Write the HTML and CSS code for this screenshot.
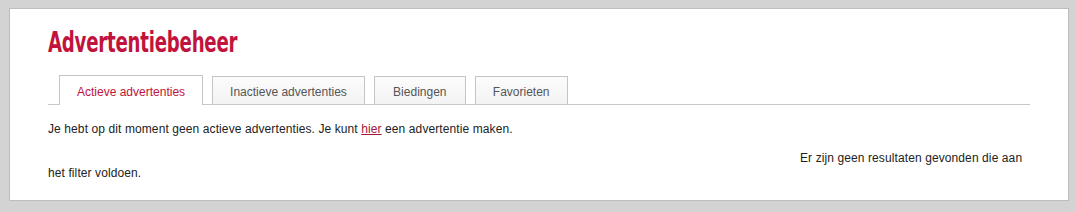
FILE: index.html
```html
<!DOCTYPE html>
<html lang="nl">
<head>
<meta charset="utf-8">
<title>Advertentiebeheer</title>
<link rel="stylesheet" href="styles.css">
</head>
<body>
<div class="panel">
  <h1 class="title"><span class="title-text">Advertentiebeheer</span></h1>
  <ul class="tabs">
    <li class="tab active">Actieve advertenties</li>
    <li class="tab">Inactieve advertenties</li>
    <li class="tab">Biedingen</li>
    <li class="tab">Favorieten</li>
  </ul>
  <p class="intro">Je hebt op dit moment geen actieve advertenties. Je kunt <a href="#" class="link">hier</a> een advertentie maken.</p>
  <p class="empty">Er zijn geen resultaten gevonden die aan het filter voldoen.</p>
</div>
</body>
</html>
```
FILE: styles.css
```css
html, body {
  margin: 0;
  padding: 0;
  background: #d3d3d3;
}
body {
  padding: 8px 0 0 9px;
  font-family: "Liberation Sans", Arial, sans-serif;
  font-size: 12px;
  letter-spacing: 0.1px;
  color: #222;
}
.panel {
  box-sizing: border-box;
  width: 1060px;
  height: 193px;
  background: #fff;
  border: 1px solid #bdbdbd;
  padding: 0 38px;
}
.title {
  margin: 0;
  padding-top: 14px;
  font-family: "DejaVu Sans Condensed", "Liberation Sans Narrow", sans-serif;
  font-weight: bold;
  font-size: 28px;
  line-height: 40px;
  letter-spacing: -0.3px;
  color: #c1133b;
}
.title-text {
  display: inline-block;
  transform: scaleX(0.72);
  transform-origin: left center;
}
.tabs {
  list-style: none;
  margin: 12px 0 0;
  padding: 0 0 0 11px;
  display: flex;
  align-items: flex-end;
  gap: 9px;
  border-bottom: 1px solid #c8c8c8;
  letter-spacing: 0;
}
.tab {
  box-sizing: border-box;
  min-width: 92px;
  text-align: center;
  border: 1px solid #c4c4c4;
  border-bottom: none;
  padding: 3px 17px 0;
  line-height: 24px;
  color: #555;
  background: linear-gradient(#fcfcfc, #f3f3f3);
}
.tab.active {
  padding: 4px 17px 1px;
  margin-bottom: -1px;
  background: #fff;
  color: #c1133b;
}
.intro {
  margin: 17px 0 0;
  line-height: 15px;
}
.link {
  color: #a3163c;
  text-decoration: underline;
}
.empty {
  margin: 14px 0 0;
  line-height: 15px;
  text-indent: 752px;
  padding-right: 6px;
}
```
